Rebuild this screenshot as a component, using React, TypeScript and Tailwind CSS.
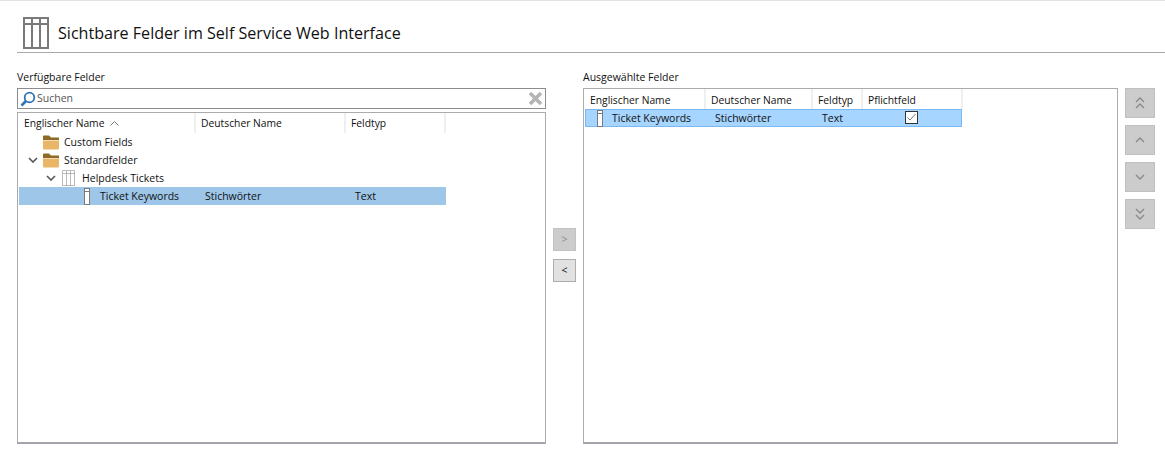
import React from "react"

const font = { fontFamily: '"Open Sans", "Noto Sans", sans-serif' }

const TableIcon = ({ className, stroke = "#7a7a7a", width = 1 }: { className: string; stroke?: string; width?: number }) => (
    <svg viewBox="0 0 26 32" className={className} fill="none" stroke={stroke} strokeWidth={width} shapeRendering="crispEdges">
        <rect x="1" y="1" width="24" height="30" />
        <path d="M1 7H25M9 1V31M17 1V31" />
    </svg>
)

const FieldIcon = () => (
    <svg width="6" height="17" viewBox="0 0 6 17" fill="none" shapeRendering="crispEdges">
        <rect x="0.5" y="0.5" width="5" height="16" fill="#fff" stroke="#7a7a7a" />
        <path d="M1 3.5H5" stroke="#7a7a7a" />
    </svg>
)

const FolderIcon = () => (
    <svg width="16" height="15" viewBox="0 0 16 15">
        <path d="M0 1.5C0 .8.5.5 1 .5H6L8 2.5H16V5H0Z" fill="#8f6a24" />
        <path d="M0 5.5H16V13C16 14 15.4 14.5 14.5 14.5H1.5C.6 14.5 0 14 0 13Z" fill="#e9b667" />
    </svg>
)

const Chevron = () => (
    <svg width="10" height="6" viewBox="0 0 10 6" fill="none" stroke="#555" strokeWidth="1.6">
        <path d="M1 1L5 5L9 1" />
    </svg>
)

const HeaderCell = ({ w, label, sort, low }: { w: string; label: string; sort?: boolean; low?: boolean }) => (
    <div className={`${w} ${low ? "pt-[2px]" : ""} h-5 flex items-center pl-[5px] border-r-2 border-[#efefef] shrink-0 text-[10.3px]`}>
        <span>{label}</span>
        {sort && (
            <svg width="9" height="5" viewBox="0 0 9 5" fill="none" stroke="#777" className="ml-[6px]">
                <path d="M.5 4.5L4.5 .5L8.5 4.5" />
            </svg>
        )}
    </div>
)

const TreeRow = ({ indent, gutter, gap, chevron, icon, label }: { indent: string; gutter: string; gap: string; chevron?: boolean; icon: React.ReactNode; label: string }) => (
    <div className={`h-[18px] flex items-center ${indent}`}>
        <div className={`${gutter} flex justify-start shrink-0`}>{chevron && <Chevron />}</div>
        {icon}
        <span className={gap}>{label}</span>
    </div>
)

const SideButton = ({ path }: { path: string }) => (
    <div className="w-[30px] h-[30px] bg-[#cccccc] border border-[#c0c0c0] flex items-center justify-center">
        <svg width="12" height="14" viewBox="0 0 12 14" fill="none" stroke="#8a8a8a" strokeWidth="1.4">
            <path d={path} />
        </svg>
    </div>
)

const App = () => {
    return (
        <div style={font} className="w-[1165px] h-[458px] bg-white text-[10.5px] leading-none text-[#111] border-t border-[#e2e2e2] overflow-hidden">
            {/* Title */}
            <div className="h-[52px] ml-[17px] border-b border-[#a8a8a8] flex items-end pb-[3px] pl-[6px]">
                <TableIcon className="w-[26px] h-[32px]" width={2} />
                <h1 className="ml-[9px] mb-[6px] text-[16.1px] leading-5 text-[#111]">Sichtbare Felder im Self Service Web Interface</h1>
            </div>

            <div className="flex pl-[17px] pt-[18px]">
                {/* Available fields */}
                <div className="w-[529px] shrink-0">
                    <div className="h-[17px] leading-3">Verfügbare Felder</div>
                    <div className="h-[21px] border border-[#8c8c8c] flex items-center pl-[2px] pr-[2px]">
                        <svg width="16" height="16" viewBox="0 0 16 16" fill="none">
                            <circle cx="9.5" cy="6.5" r="4.8" stroke="#2f74b5" strokeWidth="1.8" />
                            <path d="M6 10L1.5 14.5" stroke="#2f74b5" strokeWidth="2.6" />
                        </svg>
                        <span className="ml-px text-[#555]">Suchen</span>
                        <svg width="15" height="15" viewBox="0 0 15 15" className="ml-auto">
                            <path d="M2 2L13 13M13 2L2 13" stroke="#b4b4b4" strokeWidth="3.6" />
                        </svg>
                    </div>
                    <div className="mt-[3px] h-[332px] border border-[#ababab] border-b-2 border-b-[#a5a5ad] pl-px">
                        <div className="flex">
                            <HeaderCell w="w-[177px]" label="Englischer Name" sort />
                            <HeaderCell w="w-[150px]" label="Deutscher Name" />
                            <HeaderCell w="w-[100px]" label="Feldtyp" />
                        </div>
                        <TreeRow indent="pl-[9px]" gutter="w-[15px]" gap="ml-[5px]" icon={<FolderIcon />} label="Custom Fields" />
                        <TreeRow indent="pl-[9px]" gutter="w-[15px]" gap="ml-[5px]" chevron icon={<FolderIcon />} label="Standardfelder" />
                        <TreeRow indent="pl-[27px]" gutter="w-[16px]" gap="ml-[7px]" chevron icon={<TableIcon className="w-[13px] h-[16px]" />} label="Helpdesk Tickets" />
                        <div className="w-[427px] h-[18px] bg-[#9dc6e9] flex items-center">
                            <div className="w-[186px] flex items-center pl-[65px]">
                                <FieldIcon />
                                <span className="ml-[10px]">Ticket Keywords</span>
                            </div>
                            <div className="w-[150px]">Stichwörter</div>
                            <div>Text</div>
                        </div>
                    </div>
                </div>

                {/* Move buttons */}
                <div className="w-[37px] shrink-0 flex flex-col items-start pl-[7px] pt-[157px] gap-2">
                    <div className="w-[23px] h-[23px] bg-[#cccccc] border border-[#c2c2c2] flex items-center justify-center text-[#8a8a8a]">&gt;</div>
                    <div className="w-[23px] h-[23px] bg-[#e1e1e1] border border-[#adadad] flex items-center justify-center">&lt;</div>
                </div>

                {/* Selected fields */}
                <div className="w-[535px] shrink-0">
                    <div className="h-[17px] leading-3">Ausgewählte Felder</div>
                    <div className="h-[356px] border border-[#ababab] border-b-2 border-b-[#a5a5ad] pl-px">
                        <div className="flex">
                            <HeaderCell w="w-[121px]" label="Englischer Name" low />
                            <HeaderCell w="w-[107px]" label="Deutscher Name" low />
                            <HeaderCell w="w-[50px]" label="Feldtyp" low />
                            <HeaderCell w="w-[100px]" label="Pflichtfeld" low />
                        </div>
                        <div className="w-[377px] h-[18px] bg-[#a6d5ff] border border-[#79b8f2] flex items-center">
                            <div className="w-[129px] flex items-center pl-[11px]">
                                <FieldIcon />
                                <span className="ml-[9px]">Ticket Keywords</span>
                            </div>
                            <div className="w-[107px]">Stichwörter</div>
                            <div className="w-[83px]">Text</div>
                            <svg width="13" height="13" viewBox="0 0 13 13" fill="none" className="-mt-px">
                                <rect x=".5" y=".5" width="12" height="12" fill="#fff" stroke="#333" />
                                <path d="M2.5 6.5L5 9L10.5 3" stroke="#777" strokeWidth="1" />
                            </svg>
                        </div>
                    </div>
                </div>

                {/* Ordering buttons */}
                <div className="ml-[7px] pt-[17px] flex flex-col gap-[7px]">
                    <SideButton path="M2 6L6 2L10 6M2 12L6 8L10 12" />
                    <SideButton path="M2 9L6 5L10 9" />
                    <SideButton path="M2 5L6 9L10 5" />
                    <SideButton path="M2 2L6 6L10 2M2 8L6 12L10 8" />
                </div>
            </div>
        </div>
    )
}

export default App
